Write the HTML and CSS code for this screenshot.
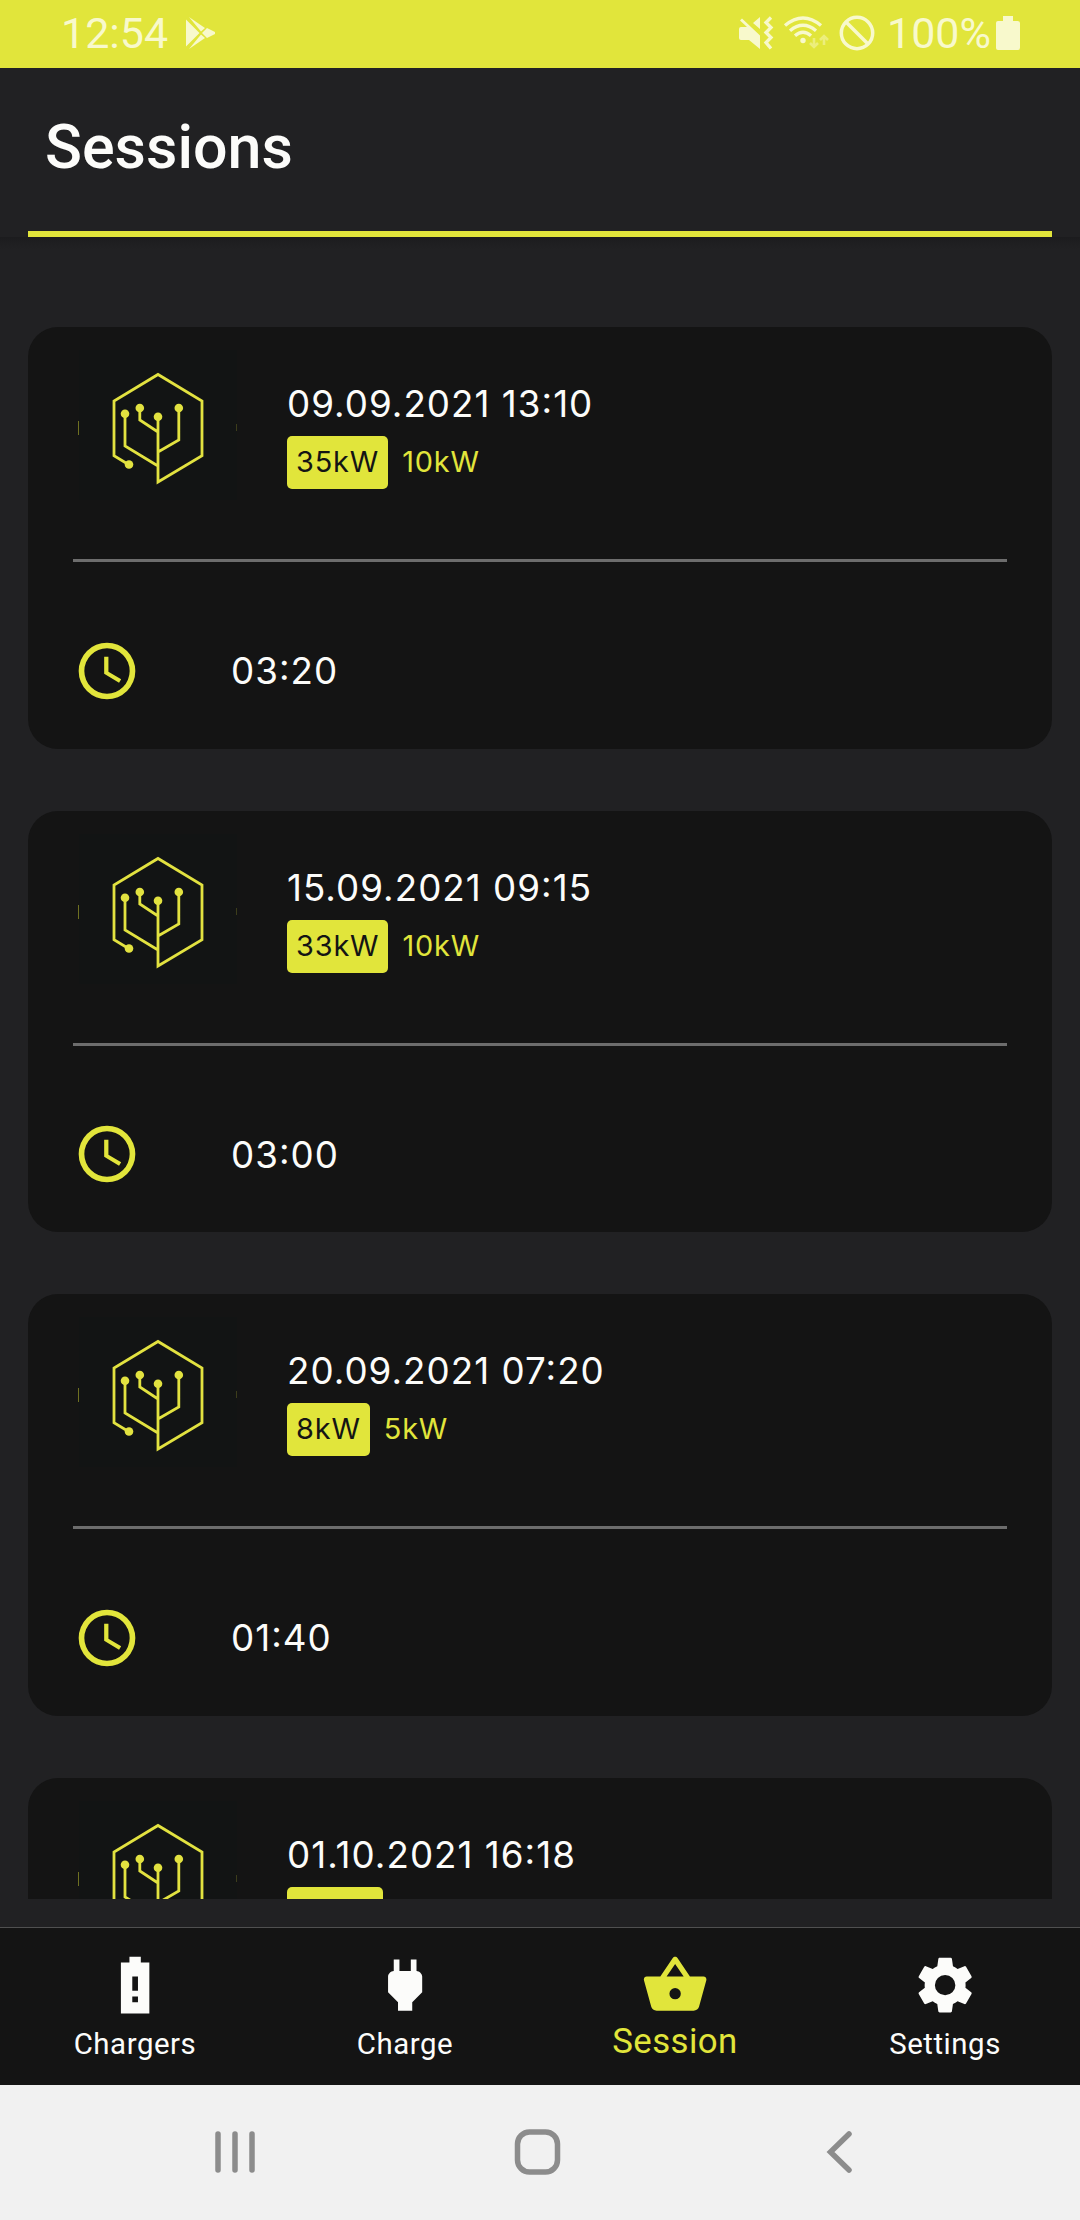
FILE: index.html
```html
<!DOCTYPE html>
<html lang="en">
<head>
<meta charset="utf-8">
<title>Sessions</title>
<link rel="stylesheet" href="styles.css">
</head>
<body>
<svg class="defs" width="0" height="0" aria-hidden="true">
  <symbol id="logo" viewBox="-1 -1 159 151">
    <rect width="158" height="150" fill="#121414"/>
    <path d="M-.5 71v14" stroke="#6f7021" stroke-width="1"/>
    <path d="M157.500 74v7" stroke="#3c3d1b" stroke-width="1"/>
    <g fill="none" stroke="#e2e240" stroke-width="2.8">
      <path d="M49.500 114.500 35 105.700V51L79 24.500 123 51v54.700L79 132V66.500M46 64v32l33 20M60.800 58v12L79 82M99.800 58v32L79 102"/>
    </g>
    <g fill="#e2e240"><circle cx="46" cy="63.800" r="4.300"/><circle cx="60.800" cy="58" r="4.300"/><circle cx="79" cy="66.700" r="4.300"/><circle cx="99.800" cy="58" r="4.300"/><circle cx="50" cy="114.500" r="4.300"/></g>
  </symbol>
  <symbol id="clock" viewBox="0 0 24 24">
    <path fill="#e2e53b" d="M12 2a10 10 0 1 0 0 20 10 10 0 0 0 0-20zm0 18a8 8 0 1 1 0-16 8 8 0 0 1 0 16zm.5-13H11v6l5.250 3.150.750-1.230-4.500-2.670z"/>
  </symbol>
</svg>

<header class="status">
  <span class="status-time">12:54</span>
  <svg class="status-play" width="32" height="34" viewBox="0 0 32 34"><path d="M1 3.500v27L14.500 17zM4 1l16 11-4 3.500zM4 33l16-11-4-3.500zM22 12l8 4v2l-8 4-5-5z" /></svg>
  <span class="status-right">
    <svg width="36" height="36" viewBox="0 0 36 36"><path d="M1 14q0-2 2-2h6L2 5.500 4 3.500 22 20.500V34l-11-9H3q-2 0-2-2zM15 8l7-6v12z"/><path class="line" d="m33 2.500-5 5 5 5-5 5 5 5-5 5 5 6" stroke-width="3.300"/></svg>
    <svg class="wifi" width="46" height="36" viewBox="0 0 46 36"><path class="line" d="M2 10.500q18-15 36 0M7 15.800q13-11 26 0M12 20.800q8-7 16 0" stroke-width="3.400"/><circle cx="20" cy="25.500" r="2.700"/><path class="faint" d="M31 23v9M27 28l4 4 4-4M41 30v-9M37 25l4-4 4 4" /></svg>
    <svg class="block" width="36" height="36" viewBox="0 0 36 36"><g class="line" stroke-width="3.500"><circle cx="18" cy="18" r="15.700"/><path d="m7 7 22 22"/></g></svg>
    <span class="percent">100%</span>
    <svg class="battery" width="24" height="34" viewBox="0 0 24 34"><path d="M7 0h10v5h4.500Q24 5 24 7v24.500Q24 34 22 34H2q-2 0-2-2V7q0-2 2-2h5z"/></svg>
  </span>
</header>

<div class="titlebar"><h1>Sessions</h1></div>

<main class="list">
  <article class="card">
    <div class="top"><svg class="logo"><use href="#logo"/></svg>
      <div class="info"><div class="date">09.09.2021 13:10</div><div class="power"><span class="chip">35kW</span><span>10kW</span></div></div></div>
    <div class="duration"><svg class="clock"><use href="#clock"/></svg><span>03:20</span></div>
  </article>
  <article class="card">
    <div class="top"><svg class="logo"><use href="#logo"/></svg>
      <div class="info"><div class="date">15.09.2021 09:15</div><div class="power"><span class="chip">33kW</span><span>10kW</span></div></div></div>
    <div class="duration"><svg class="clock"><use href="#clock"/></svg><span>03:00</span></div>
  </article>
  <article class="card">
    <div class="top"><svg class="logo"><use href="#logo"/></svg>
      <div class="info"><div class="date">20.09.2021 07:20</div><div class="power"><span class="chip">8kW</span><span>5kW</span></div></div></div>
    <div class="duration"><svg class="clock"><use href="#clock"/></svg><span>01:40</span></div>
  </article>
  <article class="card">
    <div class="top"><svg class="logo"><use href="#logo"/></svg>
      <div class="info"><div class="date">01.10.2021 16:18</div><div class="power"><span class="chip chip-cut"></span></div></div></div>
  </article>
</main>

<nav class="tabs">
  <a class="tab"><svg viewBox="0 0 24 24"><path d="M17 4h-3V2h-4v2H7v18h10V4zm-4 14h-2v-2h2v2zm0-4h-2V9h2v5z"/></svg><span>Chargers</span></a>
  <a class="tab"><svg viewBox="0 0 24 24"><path d="M16.010 7 16 3h-2v4h-4V3H8v4h-.010C7 6.990 6 7.990 6 8.990v5.490L9.500 18v3h5v-3l3.500-3.510v-5.500c0-1-1-2-1.990-1.990z"/></svg><span>Charge</span></a>
  <a class="tab active"><svg viewBox="0 0 24 24"><path d="m17.210 9-4.380-6.560c-.19-.28-.51-.42-.83-.42-.32 0-.64.14-.83.430L6.790 9H2c-.55 0-1 .45-1 1 0 .09.010.18.040.270l2.540 9.270c.23.840 1 1.460 1.920 1.460h13c.92 0 1.690-.62 1.930-1.460l2.540-9.270L23 10c0-.55-.45-1-1-1h-4.790zM9 9l3-4.400L15 9H9zm3 8a2 2 0 1 1 0-4 2 2 0 0 1 0 4z"/></svg><span>Session</span></a>
  <a class="tab"><svg viewBox="0 0 24 24"><path d="M19.140 12.940c.04-.3.060-.61.060-.94 0-.32-.02-.64-.07-.94l2.030-1.580a.49.49 0 0 0 .12-.61l-1.920-3.320a.488.488 0 0 0-.59-.22l-2.390.960c-.5-.38-1.030-.7-1.620-.94l-.36-2.540a.484.484 0 0 0-.48-.41h-3.840c-.24 0-.43.170-.47.410l-.36 2.540c-.59.240-1.130.570-1.620.940l-2.390-.96c-.22-.08-.47 0-.59.220L2.740 8.870c-.12.210-.08.470.12.610l2.030 1.580c-.05.300-.09.630-.09.940s.02.640.07.940l-2.030 1.580a.49.49 0 0 0-.12.610l1.920 3.320c.12.220.37.290.59.220l2.390-.96c.5.380 1.030.700 1.620.940l.36 2.540c.05.240.24.410.48.410h3.840c.24 0 .44-.17.470-.41l.36-2.540c.59-.24 1.130-.56 1.620-.94l2.390.960c.22.080.47 0 .59-.22l1.920-3.320c.12-.22.070-.47-.12-.61l-2.010-1.580zM12 15.600a3.600 3.600 0 1 1 0-7.200 3.600 3.600 0 0 1 0 7.200z"/></svg><span>Settings</span></a>
</nav>

<footer class="system">
  <svg width="42" height="46" viewBox="0 0 42 46"><path d="M3 4v36M20 4v36M37 4v36"/></svg>
  <svg class="home" width="48" height="48" viewBox="0 0 48 48"><rect x="3.500" y="3" width="40" height="40" rx="12"/></svg>
  <svg width="28" height="46" viewBox="0 0 28 46"><path d="M23 4 4.500 22 23 40"/></svg>
</footer>
</body>
</html>
```
FILE: styles.css
```css
* { box-sizing: border-box; }
body {
  margin: 0;
  width: 1080px;
  height: 2220px;
  overflow: hidden;
  display: flex;
  flex-direction: column;
  background: #212123;
  color: #fcfcfa;
  font-family: Roboto, sans-serif;
}
svg { display: block; flex: none; }
.defs { position: absolute; }

.status {
  height: 68px;
  flex: none;
  display: flex;
  align-items: center;
  padding: 0 60px 2px 61px;
  background: #e1e53b;
  color: #f8f9cc;
  font-size: 43px;
  fill: #f8f9cc;
}
.status-play { margin-left: 17px; }
.status-right { display: flex; align-items: center; margin-left: auto; }
.line { fill: none; stroke: #f8f9cc; }
.faint { fill: none; stroke: #ecee7c; stroke-width: 2.6; }
.wifi { margin-left: 9px; }
.block { margin-left: 10px; }
.percent { margin-left: 12px; }
.battery { margin-left: 5px; }

.titlebar {
  height: 169px;
  flex: none;
  margin: 0 28px;
  padding: 43px 17px 0;
  border-bottom: 6px solid #e1e53b;
}
h1 { margin: 0; font-size: 61px; line-height: 72px; font-weight: 500; }

.list {
  height: 1662px;
  flex: none;
  padding: 90px 28px 0;
  overflow: hidden;
  font-family: Inter, sans-serif;
  font-feature-settings: "calt" 1;
  letter-spacing: 1.02px;
  background: linear-gradient(#1c1c1e, #212123 12px);
}
.card {
  height: 421.6px;
  margin-bottom: 62px;
  padding: 22px 45px 0;
  border-radius: 30px;
  background: #141414;
}
.top {
  display: flex;
  height: 213px;
  border-bottom: 3px solid #6d6d6d;
}
.logo { width: 159px; height: 151px; margin-left: 5px; }
.info { margin: 32px 0 0 50px; }
.date { font-size: 36.75px; line-height: 46px; white-space: nowrap; }
.power {
  display: flex;
  gap: 14px;
  margin-top: 9px;
  color: #e1e53b;
  font-size: 28.9px;
  line-height: 51px;
  letter-spacing: 0.85px;
}
.chip {
  height: 53px;
  padding: 0 9px;
  border-radius: 5px;
  background: #e1e53b;
  color: #141414;
}
.chip-cut { width: 96px; }
.duration {
  display: flex;
  align-items: center;
  gap: 90px;
  height: 217px;
  font-size: 36.75px;
}
.clock { width: 68px; height: 68px; }

.tabs {
  height: 158px;
  flex: none;
  display: grid;
  grid-template-columns: repeat(4, 1fr);
  margin-top: 28px;
  border-top: 1px solid #505050;
  background: #141414;
}
.tab {
  display: flex;
  flex-direction: column;
  align-items: center;
  padding-top: 23px;
  fill: #fcfcfa;
  font-size: 29.4px;
  line-height: 34px;
  letter-spacing: 0.55px;
}
.tab svg { width: 68.25px; height: 68.25px; }
.tab span { margin-top: 8px; }
.active { color: #e1e53b; fill: #e1e53b; font-size: 34.8px; letter-spacing: 0.4px; }
.active span { margin-top: 5px; }

.system {
  height: 135px;
  flex: none;
  display: flex;
  align-items: center;
  justify-content: space-between;
  padding: 0 226px 0 215px;
  background: #f1f1f1;
}
.system svg { fill: none; stroke: #8c8c8c; stroke-width: 5.5; stroke-linecap: round; }
.system .home { margin-right: 8px; }
```
